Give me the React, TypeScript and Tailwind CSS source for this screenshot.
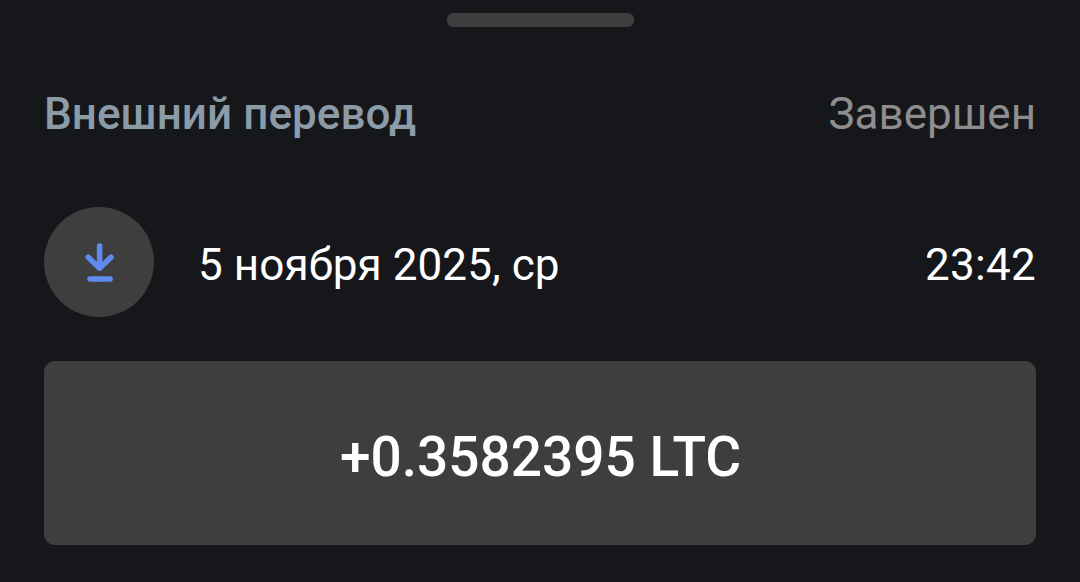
export default function App() {
  return (
    <main className="flex h-[582px] w-[1080px] flex-col overflow-hidden bg-[#16171b] px-11 pt-[13px] font-['Roboto',sans-serif] text-[44px] leading-[52px] text-white">
      <div className="h-[14px] w-[187px] shrink-0 self-center rounded-[6px] bg-[#3e3e3e]" />
      <header className="mt-[61px] flex justify-between">
        <h1 className="font-medium tracking-[0.05px] text-[#8b9ba7]">Внешний перевод</h1>
        <span className="text-[#8e8e8f]">Завершен</span>
      </header>
      <section className="mt-[67px] flex items-center">
        <div className="flex size-[110px] items-center justify-center rounded-full bg-[#3e3e3e]">
          <svg viewBox="0 0 110 110" className="size-[110px]" fill="none" stroke="#5f8af0" strokeWidth="5.5" strokeLinecap="round" strokeLinejoin="round">
            <path d="M55.6 39V60M44.2 50.2L55.6 61.2L67 50.2M46 72H66.2" />
          </svg>
        </div>
        <span className="ml-11 pt-1.5 tracking-[0.08px]">5 ноября 2025, ср</span>
        <time className="ml-auto pt-1.5 tracking-[0.3px]">23:42</time>
      </section>
      <section className="mt-11 flex h-[184px] items-center justify-center rounded-[11px] bg-[#3e3e3e] text-[55px] leading-[64px] font-medium">
        <span className="pt-2 pl-px">+0.3582395 LTC</span>
      </section>
    </main>
  );
}
